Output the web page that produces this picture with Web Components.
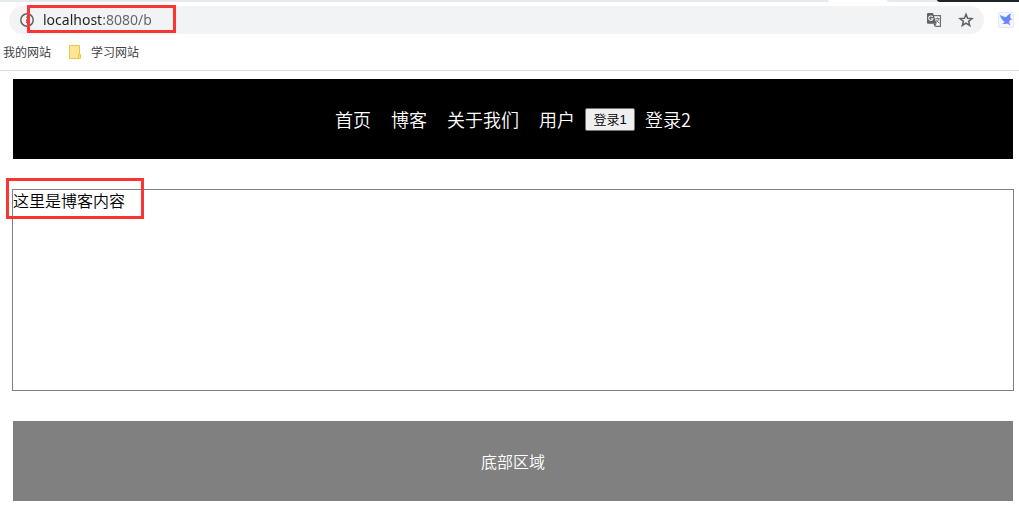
<!DOCTYPE html>
<html lang="zh-CN">
<head>
<meta charset="utf-8">
<title>博客</title>
<style>
html { background: #fff; }
body { margin: 0; font: 16px/20px "Noto Sans CJK SC", sans-serif; color: #000; }
</style>
</head>
<body>
<browser-chrome></browser-chrome>
<blog-page>
  <site-nav slot="header"></site-nav>
  <blog-content slot="content">这里是博客内容</blog-content>
  <site-footer slot="footer">底部区域</site-footer>
</blog-page>

<template id="chrome-tpl">
  <style>
    :host { display: block; background: #fff; border-bottom: 1px solid #dadce0; }
    .tabs { display: flex; height: 2px; background: #fff; }
    .tab { background: #e7eaed; }
    .tab.first { flex: 1; border-bottom-right-radius: 4px 2px; }
    .tab.next { width: 50px; margin-left: 58px; border-bottom-left-radius: 4px 2px; }
    .tab.dark { width: 82px; background: #202327; border-bottom-left-radius: 4px 2px; }
    .tools { display: flex; align-items: center; gap: 14px; padding: 4px 5px 4px 9px; }
    button { border: 0; padding: 0; background: none; display: block; }
    svg { display: block; }
    bookmark-bar { display: block; }
  </style>
  <div class="tabs"><div class="tab first"></div><div class="tab next"></div><div class="tab dark"></div></div>
  <div class="tools">
    <address-bar></address-bar>
    <button aria-label="扩展程序">
      <svg width="16" height="16" viewBox="0 0 16 16">
        <defs><linearGradient id="bird" x1="0" y1="0" x2="1" y2="1"><stop offset="0" stop-color="#4fa0fb"/><stop offset=".5" stop-color="#6685fa"/><stop offset="1" stop-color="#b06af5"/></linearGradient></defs>
        <rect x=".5" y=".5" width="15" height="15" rx="1.5" fill="#f4f7ff" stroke="#e2e9fb"/>
        <path fill="url(#bird)" d="M1.8 2.8C4 4.2 6 4.8 8 5.3 9.2 3.3 10.8 2 13 1.4 12.3 3 12.2 4.5 12.3 6L14.3 7.2 12 8.1C11.8 9 11.4 9.5 11 10L12.6 13.6 9 11.4C7.3 12.3 5.6 12 4.2 11.3 5.4 11 6.2 10.6 6.8 10 4.4 8.6 2.6 6.2 1.8 2.8Z"/>
      </svg>
    </button>
  </div>
  <bookmark-bar></bookmark-bar>
</template>

<template id="address-tpl">
  <style>
    :host { display: flex; align-items: center; flex: 1; min-width: 0; height: 28px; box-sizing: border-box; padding: 0 10px; border-radius: 14px; background: #f1f3f4; position: relative; }
    .info, .act { border: 0; padding: 0; background: none; display: block; }
    .act + .act { margin-left: 16px; }
    svg { display: block; }
    input { flex: 1; min-width: 0; height: 20px; margin: 0 8px; padding: 0; border: 0; outline: 0; color: #5f6368;
      font: 14px/20px "Noto Sans", "Noto Sans CJK SC", sans-serif;
      background: linear-gradient(90deg, #202124 60px, #5f6368 60px); -webkit-background-clip: text; background-clip: text; -webkit-text-fill-color: transparent; }
    .mark { position: absolute; left: 18px; top: -1px; width: 149px; height: 28px; box-sizing: border-box; border: 3px solid #fa3534; pointer-events: none; }
  </style>
  <button class="info" aria-label="网站信息"><svg width="16" height="16" viewBox="0 0 16 16"><circle cx="8" cy="8" r="6.2" fill="none" stroke="#5f6368" stroke-width="1.5"/><path d="M8 7.2v4M8 4.4v1.6" stroke="#5f6368" stroke-width="1.6"/></svg></button>
  <input type="text" aria-label="地址栏" value="localhost:8080/b" spellcheck="false">
  <button class="act" aria-label="翻译"><svg width="16" height="16" viewBox="0 0 16 16">
    <path d="M7 3.6h7.4v10.8H9.2" fill="#fff" stroke="#696c70" stroke-width="1.2"/>
    <path d="M2 1h5l3.6 10.8H2A1 1 0 0 1 1 10.8V2A1 1 0 0 1 2 1Z" fill="#5f6368"/>
    <path d="M7.5 11.8h3.1L8.6 14.7Z" fill="#5f6368"/>
    <path d="M6.7 4.9A2.2 2.2 0 1 0 7 6.8H4.9" fill="none" stroke="#f1f3f4" stroke-width="1.1"/>
    <path d="M9.4 6.7h4M11.4 5.5v1.2M12.8 6.7C12.5 8.3 11.5 9.5 10 10.5M10.2 7.8 13.2 11.3" fill="none" stroke="#696c70"/>
  </svg></button>
  <button class="act" aria-label="添加书签"><svg width="16" height="16" viewBox="0 0 16 16"><path fill="none" stroke="#5f6368" stroke-width="1.5" d="m8 2.2 1.6 4 4.4.3-3.4 2.8 1.1 4.2L8 11.2l-3.7 2.3 1.1-4.2L2 6.5l4.4-.3Z"/></svg></button>
  <div class="mark"></div>
</template>

<template id="bookmark-tpl">
  <style>
    nav { display: flex; align-items: center; gap: 16px; height: 32px; padding: 0 3px 4px; box-sizing: border-box; font-size: 12px; line-height: 20px; }
    a { display: flex; align-items: center; gap: 9px; color: #3c4043; text-decoration: none; }
    svg { display: block; }
  </style>
  <nav aria-label="书签">
    <a href="#mine">我的网站</a>
    <a href="#study"><svg width="15" height="16" viewBox="0 0 15 16"><path d="M2.5 1.5h10v9h1v4h-11Z" fill="#ffe694" stroke="#edc548"/><path d="M11.5 14v-3.5h1" fill="none" stroke="#edc548"/></svg>学习网站</a>
  </nav>
</template>

<template id="page-tpl">
  <style>
    :host { display: flex; flex-direction: column; gap: 30px; padding: 8px 5px 4px 12px; font-weight: 350; }
    .inset { padding: 0 1px; }
  </style>
  <header class="inset"><slot name="header"></slot></header>
  <main><slot name="content"></slot></main>
  <footer class="inset"><slot name="footer"></slot></footer>
</template>

<template id="nav-tpl">
  <style>
    :host { display: block; background: #000; }
    nav { display: flex; justify-content: center; align-items: center; min-height: 80px; font-size: 18px; line-height: 24px; }
    a { color: #fff; text-decoration: none; margin: 0 10px; }
    button { width: 50px; height: 23px; box-sizing: border-box; padding: 0; border: 1px solid #767676; border-radius: 2px; background: #efefef; color: #000; font: 350 13px/19px "Liberation Sans", "Noto Sans CJK SC", sans-serif; }
  </style>
  <nav aria-label="主导航">
    <a href="#home">首页</a><a href="#b">博客</a><a href="#about">关于我们</a><a href="#user">用户</a><button type="button">登录1</button><a href="#login">登录2</a>
  </nav>
</template>

<template id="content-tpl">
  <style>
    :host { display: block; position: relative; min-height: 202px; box-sizing: border-box; border: 1px solid #808080; line-height: 20px; }
    .mark { position: absolute; left: -7px; top: -12px; width: 138px; height: 41px; box-sizing: border-box; border: 3px solid #fa3534; pointer-events: none; }
  </style>
  <slot></slot><div class="mark"></div>
</template>

<template id="footer-tpl">
  <style>
    :host { display: flex; align-items: center; justify-content: center; min-height: 80px; background: #808080; color: #fff; }
  </style>
  <slot></slot>
</template>

<script>
class TemplateElement extends HTMLElement {
  constructor() {
    super();
    const template = document.getElementById(this.constructor.template);
    this.attachShadow({ mode: "open" }).append(template.content.cloneNode(true));
  }
}
const define = (name, template) =>
  customElements.define(name, class extends TemplateElement { static template = template; });
define("address-bar", "address-tpl");
define("bookmark-bar", "bookmark-tpl");
define("browser-chrome", "chrome-tpl");
define("site-nav", "nav-tpl");
define("blog-content", "content-tpl");
define("site-footer", "footer-tpl");
define("blog-page", "page-tpl");
</script>
</body>
</html>
